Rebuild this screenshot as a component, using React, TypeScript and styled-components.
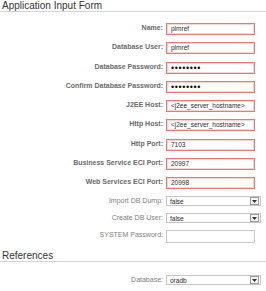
import React from "react";
import styled, { createGlobalStyle } from "styled-components";

const Global = createGlobalStyle`
  html, body { margin: 0; padding: 0; background: #fff; }
  body { font-family: "Liberation Sans", Arial, sans-serif; }
`;

const Page = styled.div`
  width: 266px;
  height: 291px;
  overflow: hidden;
  background: #fff;
`;

const Heading = styled.div<{ $top?: number }>`
  height: 11px;
  line-height: 11px;
  font-size: 10px;
  color: #333;
  padding-left: 2px;
  margin-top: ${(p) => p.$top ?? 0}px;
  border-bottom: 1px solid #d4d4d4;
  white-space: nowrap;
`;

const Form = styled.div<{ $pad: number }>`
  display: flex;
  flex-direction: column;
  padding-top: ${(p) => p.$pad}px;
`;

const Row = styled.div<{ $h: number }>`
  display: grid;
  grid-template-columns: 163px 1fr;
  column-gap: 3px;
  align-items: start;
  height: ${(p) => p.$h}px;
`;

const Label = styled.div<{ $bold?: boolean }>`
  text-align: right;
  font-size: 7px;
  line-height: 10px;
  white-space: nowrap;
  color: ${(p) => (p.$bold ? "#6a6a6a" : "#808080")};
  font-weight: ${(p) => (p.$bold ? 700 : 400)};
`;

const Input = styled.div<{ $error?: boolean; $h?: number }>`
  box-sizing: border-box;
  width: 89px;
  height: ${(p) => p.$h ?? 12}px;
  border: 1px solid ${(p) => (p.$error ? "#e27a7a" : "#c8c8c8")};
  box-shadow: ${(p) => (p.$error ? "inset 0 0 0 1px #f8d4d4" : "none")};
  background: #fff;
  font-size: 6.5px;
  line-height: 10px;
  color: #2a2a2a;
  padding-left: 4px;
  white-space: nowrap;
  overflow: hidden;
`;

const Dots = styled.span`
  font-size: 9px;
  letter-spacing: 0.6px;
  color: #111;
`;

const Select = styled.div`
  box-sizing: border-box;
  width: 95px;
  height: 10px;
  border: 1px solid #c4c4c4;
  background: #fff;
  display: flex;
  align-items: center;
  justify-content: space-between;
  font-size: 6.5px;
  color: #2a2a2a;
  padding-left: 3px;
`;

const DropButton = styled.div`
  box-sizing: border-box;
  width: 9px;
  height: 8px;
  margin-right: 1px;
  border: 1px solid #9a9a9a;
  background: #f4f4f4;
  display: flex;
  align-items: center;
  justify-content: center;
`;

const Arrow = () => (
  <svg width="5" height="3" viewBox="0 0 5 3">
    <polygon points="0,0 5,0 2.5,3" fill="#333" />
  </svg>
);

const inputs: { label: string; value: string; password?: boolean }[] = [
  { label: "Name:", value: "plmref" },
  { label: "Database User:", value: "plmref" },
  { label: "Database Password:", value: "••••••••", password: true },
  { label: "Confirm Database Password:", value: "••••••••", password: true },
  { label: "J2EE Host:", value: "<j2ee_server_hostname>" },
  { label: "Http Host:", value: "<j2ee_server_hostname>" },
  { label: "Http Port:", value: "7103" },
  { label: "Business Service ECI Port:", value: "20997" },
  { label: "Web Services ECI Port:", value: "20998" },
];

export default function App() {
  return (
    <Page>
      <Global />
      <Heading>Application Input Form</Heading>
      <Form $pad={11}>
        {inputs.map((f) => (
          <Row key={f.label} $h={19.25}>
            <Label $bold>{f.label}</Label>
            <Input $error>{f.password ? <Dots>{f.value}</Dots> : f.value}</Input>
          </Row>
        ))}
        <Row $h={17}>
          <Label>Import DB Dump:</Label>
          <Select>
            false
            <DropButton>
              <Arrow />
            </DropButton>
          </Select>
        </Row>
        <Row $h={17}>
          <Label>Create DB User:</Label>
          <Select>
            false
            <DropButton>
              <Arrow />
            </DropButton>
          </Select>
        </Row>
        <Row $h={17}>
          <Label>SYSTEM Password:</Label>
          <Input $h={13} />
        </Row>
      </Form>
      <Heading $top={3}>References</Heading>
      <Form $pad={13}>
        <Row $h={12}>
          <Label>Database:</Label>
          <Select>
            oradb
            <DropButton>
              <Arrow />
            </DropButton>
          </Select>
        </Row>
      </Form>
    </Page>
  );
}
